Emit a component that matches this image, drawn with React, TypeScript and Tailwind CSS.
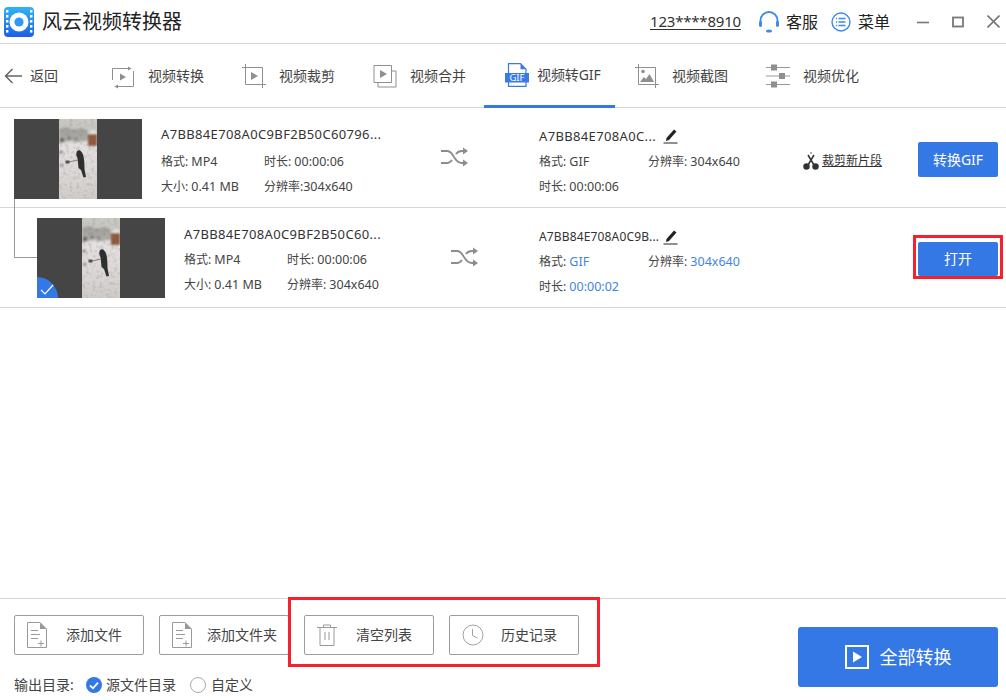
import React from "react";

const FONT = "font-['Noto_Sans','Noto_Sans_CJK_SC',sans-serif]";

function Logo() {
  return (
    <svg width="30" height="30" viewBox="0 0 30 30">
      <defs>
        <linearGradient id="lg" x1="0" y1="0" x2="0" y2="1">
          <stop offset="0" stopColor="#2fb4f4" />
          <stop offset="1" stopColor="#1d5fe6" />
        </linearGradient>
      </defs>
      <rect width="30" height="30" rx="4" fill="url(#lg)" />
      {[3, 8, 13, 18, 23].map((y) => (
        <g key={y} fill="#fff">
          <rect x="2" y={y} width="2.4" height="2.6" />
          <rect x="26" y={y} width="2.4" height="2.6" />
        </g>
      ))}
      <circle cx="15" cy="15" r="9.5" fill="#fff" />
      <circle cx="15" cy="15" r="4.6" fill="#2f9bf0" />
    </svg>
  );
}

const G = "#8f8f8f";

function TabConvert() {
  return (
    <svg width="24" height="26" viewBox="0 0 24 26" fill="none" stroke={G} strokeWidth="1">
      <path d="M1.500 17V5.500H18M4 23.500h18.500V8" />
      <path d="M17 3.500v4l3.500-2z" fill={G} stroke="none" />
      <path d="M7 21.500v4l-3.500-2z" fill={G} stroke="none" />
      <path d="M9 10.500v7l6-3.500z" fill={G} stroke="none" />
    </svg>
  );
}
function TabCrop() {
  return (
    <svg width="24" height="26" viewBox="0 0 24 26" fill="none" stroke={G} strokeWidth="1">
      <path d="M3.500 1v20.500H24M0 4.500h20.500V25" />
      <path d="M9 9v8l7-4z" fill={G} stroke="none" />
    </svg>
  );
}
function TabMerge() {
  return (
    <svg width="24" height="24" viewBox="0 0 24 24" fill="none" stroke={G} strokeWidth="1">
      <path d="M1 1.500h17.500v17H1z" />
      <path d="M5 18.500v4.500h18V7h-4.500" />
      <path d="M7 6v8l7-4z" fill={G} stroke="none" />
    </svg>
  );
}
function TabGif() {
  return (
    <svg width="24" height="24" viewBox="0 0 24 24">
      <path d="M3.500 11V.7H15.500l5.500 5.500V11M3.500 18v5.300h17.500V18" fill="none" stroke="#3a7ae8" strokeWidth="1.200" />
      <path d="M15.500 .7v5.500h5.500z" fill="#3a7ae8" />
      <rect x="0" y="10" width="24" height="9.500" fill="#3a7ae8" />
      <text x="12" y="18.300" textAnchor="middle" fontSize="9.500" fill="#fff" fontFamily="'Noto Sans',sans-serif">GIF</text>
    </svg>
  );
}
function TabShot() {
  return (
    <svg width="24" height="26" viewBox="0 0 24 26" fill="none" stroke={G} strokeWidth="1">
      <path d="M3.500 1v20.500H24M0 4.500h20.500V25" />
      <circle cx="8" cy="8.500" r="1.800" fill={G} stroke="none" />
      <path d="M5 19l4-5 2 2 3.500-5 4.500 8z" fill={G} stroke="none" />
    </svg>
  );
}
function TabOpt() {
  return (
    <svg width="24" height="24" viewBox="0 0 24 24" stroke="#999" strokeWidth="1">
      <path d="M0 3.500h24M0 12h24M0 20.500h24" />
      <g fill={G} stroke="none">
        <rect x="5" y="0.500" width="6" height="6" />
        <rect x="13" y="9" width="6" height="6" />
        <rect x="5" y="17.500" width="6" height="6" />
      </g>
    </svg>
  );
}

function Photo({ id }: { id: string }) {
  return (
    <svg width="38" height="80" viewBox="0 0 38 80" className="block">
      <defs>
        <linearGradient id={`snow${id}`} x1="0" y1="0" x2="0" y2="1">
          <stop offset="0" stopColor="#c9c8c2" />
          <stop offset="0.14" stopColor="#c6c5bf" />
          <stop offset="0.32" stopColor="#e4e0e0" />
          <stop offset="0.7" stopColor="#dbd7d6" />
          <stop offset="1" stopColor="#cfcbc8" />
        </linearGradient>
        <filter id={`soft${id}`} x="-10%" y="-10%" width="120%" height="120%">
          <feGaussianBlur stdDeviation="1" />
        </filter>
        <filter id={`grain${id}`} x="0" y="0" width="100%" height="100%">
          <feTurbulence type="fractalNoise" baseFrequency="0.28" numOctaves="2" seed="4" />
          <feColorMatrix
            type="matrix"
            values="0 0 0 0 0.35  0 0 0 0 0.33  0 0 0 0 0.32  2.6 0 0 0 -1.25"
          />
        </filter>
      </defs>
      <rect width="38" height="80" fill={`url(#snow${id})`} />
      <rect width="38" height="80" filter={`url(#grain${id})`} opacity="0.45" />
      <g filter={`url(#soft${id})`}>
        <path d="M0 10l7-2 8 3 8-2 7 4v8l-10 2-10-1-10 3z" fill="#7f7e7a" opacity="0.5" />
        <circle cx="3" cy="21" r="2" fill="#5a5856" />
        <circle cx="10" cy="19" r="1.500" fill="#6a6765" />
        <circle cx="17" cy="20" r="1.300" fill="#777573" />
        <circle cx="2" cy="33" r="1.500" fill="#6a6765" />
        <circle cx="3" cy="46" r="1.200" fill="#6a6765" />
        <rect x="29" y="14" width="9" height="13" fill="#8d5a3c" />
        <path d="M28 15l5-4 5 1v3z" fill="#e6e2de" />
      </g>
      <path d="M10 43l9-2" stroke="#6a6764" strokeWidth="0.800" />
      <rect x="6.500" y="41.500" width="4" height="3" fill="#55524f" />
      <path d="M17.500 33.500c.5-2.500 3.800-3 5-.5 1.800 1.500 2.500 6 2.800 10l.2 7 1.500 8-2.500.5-2.500-7.500-2.500-2-.8-9-1.500-4z" fill="#2f2f30" />
    </svg>
  );
}

function Thumb({ check, id }: { check?: boolean; id: string }) {
  return (
    <div className="relative w-[128px] h-[80px] bg-[#454545] flex justify-center overflow-hidden shrink-0">
      <Photo id={id} />
      {check && (
        <div className="absolute left-0 bottom-0 w-[21px] h-[21px] bg-[#3478e6] rounded-tr-[21px] flex items-end">
          <svg width="16" height="14" viewBox="0 0 16 14" fill="none" stroke="#fff" strokeWidth="1.200" className="mb-[2px] ml-[2px]">
            <path d="M2 8l4 4 8-9" />
          </svg>
        </div>
      )}
    </div>
  );
}

function Shuffle() {
  return (
    <svg width="28" height="20" viewBox="0 0 28 20" fill="none" stroke="#8c8c8c" strokeWidth="1.800">
      <path d="M0 4h6c4 0 5 3 7 6s3 6 8 6h3" />
      <path d="M0 16h6c2.500 0 4-1.500 5-3M15 7c1-1.500 3-3 6-3h3" />
      <path d="M22 0.500l5 3.500-5 3.500z" fill="#8c8c8c" stroke="none" />
      <path d="M22 12.500l5 3.500-5 3.500z" fill="#8c8c8c" stroke="none" />
    </svg>
  );
}

function Pencil() {
  return (
    <svg width="15" height="16" viewBox="0 0 15 16" className="shrink-0">
      <path d="M3.500 10L11 1.500l2.500 2-7.500 8.500L3 13z" fill="#222" />
      <path d="M0.500 15h14" stroke="#222" strokeWidth="1" />
    </svg>
  );
}

function Scissors() {
  return (
    <svg width="16" height="18" viewBox="0 0 16 18" fill="none" stroke="#333" strokeWidth="1.500">
      <path d="M5 3l6 10M11 3L5 13" />
      <path d="M8 0v2" strokeWidth="0.800" />
      <circle cx="3.500" cy="14.500" r="2.500" fill="#333" />
      <circle cx="12.500" cy="14.500" r="2.500" fill="#333" />
    </svg>
  );
}

function TxFile({ text }: { text: string }) {
  return <div className="text-[13px] leading-[18px] tracking-[0.35px] text-[#333] whitespace-nowrap">{text}</div>;
}

function Meta({ label, value, blue, w }: { label: string; value: string; blue?: boolean; w?: string }) {
  return (
    <div className={`text-xs leading-[18px] text-[#444] whitespace-nowrap ${w ?? ""}`}>
      {label}
      <span className={`text-[12.5px] ${blue ? "text-[#3f84e5]" : ""}`}>{value}</span>
    </div>
  );
}

function FileIcon() {
  return (
    <svg width="20" height="26" viewBox="0 0 20 26" fill="none" stroke="#999" strokeWidth="1">
      <path d="M.5.500H13l6.500 6.500v18.500H.5z" />
      <path d="M13 .5l6.500 6.500H13z" fill="#999" stroke="none" />
      <path d="M4 8.500h7M4 12.500h9M4 16.500h7" />
      <path d="M11 21.500h6M14 18.500v6" />
    </svg>
  );
}

function TrashIcon() {
  return (
    <svg width="20" height="22" viewBox="0 0 20 22" fill="none" stroke="#999" strokeWidth="1">
      <path d="M0 3.500h20M6.500 3.500V1h7v2.500" />
      <path d="M3 3.500v18h14v-18" />
      <path d="M8 8v8M12 8v8" />
    </svg>
  );
}

function ClockIcon() {
  return (
    <svg width="22" height="22" viewBox="0 0 22 22" fill="none" stroke="#a3a3a3" strokeWidth="1">
      <circle cx="11" cy="11" r="10" />
      <path d="M10.500 5v6.500l5 2.500" />
    </svg>
  );
}

function FootBtn({ icon, text, pad, gap }: { icon: React.ReactNode; text: string; pad: string; gap: string }) {
  return (
    <div className={`w-[130px] h-[40px] border border-[#9c9c9c] rounded-[2px] flex items-center ${pad} ${gap} text-sm text-[#444] whitespace-nowrap`}>
      {icon}
      <span>{text}</span>
    </div>
  );
}

const tabs = [
  { icon: <TabConvert />, text: "视频转换" },
  { icon: <TabCrop />, text: "视频裁剪" },
  { icon: <TabMerge />, text: "视频合并" },
  { icon: <TabGif />, text: "视频转GIF", active: true },
  { icon: <TabShot />, text: "视频截图" },
  { icon: <TabOpt />, text: "视频优化" },
];

export default function App() {
  return (
    <div className={`relative w-[1006px] h-[700px] bg-white overflow-hidden flex flex-col ${FONT}`}>
      {/* title bar */}
      <div className="h-[44px] shrink-0 border-b border-[#d6d6d6] flex items-center pl-[4px]">
        <Logo />
        <span className="ml-[8px] text-[20px] text-[#222] whitespace-nowrap">风云视频转换器</span>
        <span className="ml-[468px] w-[91px] text-[15px] tracking-[-0.2px] text-[#333] underline underline-offset-2 whitespace-nowrap">123****8910</span>
        <svg width="20" height="22" viewBox="0 0 20 22" fill="none" className="ml-[18px]">
          <path d="M1.500 13V9.500a8.500 8.500 0 0 1 17 0V13" stroke="#3f8ae8" strokeWidth="1.800" />
          <rect x="0" y="10" width="3" height="6" rx="1.400" fill="#3f8ae8" />
          <rect x="17" y="10" width="3" height="6" rx="1.400" fill="#3f8ae8" />
          <ellipse cx="10" cy="20" rx="3" ry="1.600" fill="#3f8ae8" />
        </svg>
        <span className="ml-[7px] text-[16px] text-[#222] whitespace-nowrap">客服</span>
        <svg width="20" height="20" viewBox="0 0 20 20" fill="none" stroke="#3f8ae8" className="ml-[13px]">
          <circle cx="10" cy="10" r="9" strokeWidth="1.400" />
          <path d="M7.500 6.500h7M7.500 10h7M7.500 13.500h7" strokeWidth="1.400" />
          <path d="M5 6.500h1.200M5 10h1.200M5 13.500h1.200" strokeWidth="1.400" />
        </svg>
        <span className="ml-[7px] text-[16px] text-[#222] whitespace-nowrap">菜单</span>
        <svg width="12" height="12" viewBox="0 0 12 12" stroke="#777" strokeWidth="1.600" fill="none" className="ml-[27px]">
          <path d="M0 6.500h12" />
        </svg>
        <svg width="12" height="12" viewBox="0 0 12 12" stroke="#777" strokeWidth="1.800" fill="none" className="ml-[23px]">
          <rect x="1" y="1.500" width="10" height="9" />
        </svg>
        <svg width="13" height="13" viewBox="0 0 13 13" stroke="#777" strokeWidth="1.600" fill="none" className="ml-[23px]">
          <path d="M.5.500l12 12M12.500.5l-12 12" />
        </svg>
      </div>

      {/* tabs */}
      <div className="h-[64px] shrink-0 border-b border-[#d6d6d6] flex">
        <div className="w-[91px] flex items-center pl-[4px] gap-[8px] text-sm text-[#444]">
          <svg width="18" height="16" viewBox="0 0 18 16" fill="none" stroke="#666" strokeWidth="1.500">
            <path d="M18 8H1.500M8.500 1L1.500 8l7 7" />
          </svg>
          <span>返回</span>
        </div>
        {tabs.map((t) => (
          <div
            key={t.text}
            className={`w-[131px] h-[64px] flex items-center whitespace-nowrap text-sm ${
              t.active ? "pl-[21px] gap-[8px] text-[#444] border-b-[3px] border-[#3478e6]" : "pl-[20px] gap-[13px] text-[#444]"
            }`}
          >
            {t.icon}
            <span className={t.active ? "tracking-[-0.1px]" : ""}>{t.text}</span>
          </div>
        ))}
      </div>

      {/* list */}
      <div className="relative flex-1">
        {/* row 1 */}
        <div className="h-[100px] border-b border-[#d6d6d6] flex items-start pl-[14px] pt-[11px]">
          <Thumb id="a" />
          <div className="ml-[19px] w-[278px] shrink-0">
            <div className="mt-[6px]"><TxFile text="A7BB84E708A0C9BF2B50C60796..." /></div>
            <div className="flex mt-[10px]"><Meta w="w-[103px]" label="格式: " value="MP4" /><Meta label="时长: " value="00:00:06" /></div>
            <div className="flex mt-[7px]"><Meta w="w-[103px]" label="大小: " value="0.41 MB" /><Meta label="分辨率:" value="304x640" /></div>
          </div>
          <div className="mt-[28px] w-[100px] shrink-0 pl-[2px]"><Shuffle /></div>
          <div className="w-[264px] shrink-0">
            <div className="flex items-center gap-[7px] mt-[8px]"><TxFile text="A7BB84E708A0C..." /><Pencil /></div>
            <div className="flex mt-[8px]"><Meta w="w-[109px]" label="格式: " value="GIF" /><Meta label="分辨率: " value="304x640" /></div>
            <div className="mt-[7px]"><Meta label="时长: " value="00:00:06" /></div>
          </div>
          <div className="w-[115px] shrink-0 mt-[33px] flex items-center gap-[3px] text-xs text-[#333] whitespace-nowrap">
            <Scissors />
            <span className="underline">裁剪新片段</span>
          </div>
          <div className="w-[80px] h-[35px] mt-[23px] bg-[#3478e6] rounded-[2px] text-white text-sm flex items-center justify-center whitespace-nowrap">转换GIF</div>
        </div>

        {/* row 2 */}
        <div className="h-[100px] border-b border-[#d6d6d6] flex items-start pl-[37px] pt-[10px]">
          <Thumb check id="b" />
          <div className="ml-[19px] w-[267px] shrink-0">
            <div className="mt-[7px]"><TxFile text="A7BB84E708A0C9BF2B50C60..." /></div>
            <div className="flex mt-[8px]"><Meta w="w-[103px]" label="格式: " value="MP4" /><Meta label="时长: " value="00:00:06" /></div>
            <div className="flex mt-[7px]"><Meta w="w-[103px]" label="大小: " value="0.41 MB" /><Meta label="分辨率: " value="304x640" /></div>
          </div>
          <div className="mt-[29px] w-[88px] shrink-0"><Shuffle /></div>
          <div className="w-[379px] shrink-0">
            <div className="flex items-center gap-[4px] mt-[10px]">
              <span className="text-xs leading-[18px] tracking-[0.15px] text-[#333] whitespace-nowrap">A7BB84E708A0C9B...</span>
              <Pencil />
            </div>
            <div className="flex mt-[7px]"><Meta w="w-[109px]" label="格式: " value="GIF" blue /><Meta label="分辨率: " value="304x640" blue /></div>
            <div className="mt-[7px]"><Meta label="时长: " value="00:00:02" blue /></div>
          </div>
          <div className="w-[80px] h-[34px] mt-[24px] bg-[#3478e6] rounded-[2px] text-white text-sm flex items-center justify-center">打开</div>
        </div>

        {/* connector between source and clip */}
        <div className="absolute left-[14px] top-[91px] w-[23px] h-[59px] border-l border-b border-[#999]" />
        {/* annotation */}
        <div className="absolute left-[913px] top-[127px] w-[90px] h-[44px] border-[3px] border-[#f5222d]" />
      </div>

      {/* footer */}
      <div className="h-[102px] shrink-0 border-t border-[#d6d6d6] flex pl-[14px] pt-[16px] relative">
        <div className="w-[784px] shrink-0">
          <div className="flex gap-[15px]">
            <FootBtn icon={<FileIcon />} text="添加文件" pad="pl-[12px]" gap="gap-[19px]" />
            <FootBtn icon={<FileIcon />} text="添加文件夹" pad="pl-[12px]" gap="gap-[15px]" />
            <FootBtn icon={<TrashIcon />} text="清空列表" pad="pl-[12px]" gap="gap-[19px]" />
            <FootBtn icon={<ClockIcon />} text="历史记录" pad="pl-[12px]" gap="gap-[17px]" />
          </div>
          <div className="flex items-center mt-[20px] text-[13px] text-[#444] h-[20px] whitespace-nowrap">
            <span className="w-[72px] text-sm">输出目录:</span>
            <svg width="16" height="16" viewBox="0 0 16 16" className="shrink-0">
              <circle cx="8" cy="8" r="8" fill="#3478e6" />
              <path d="M4 8.500l3 2.800 5-5.600" stroke="#fff" strokeWidth="1.800" fill="none" />
            </svg>
            <span className="ml-[4px] text-sm">源文件目录</span>
            <span className="ml-[14px] w-[16px] h-[16px] rounded-full border border-[#aaa] shrink-0" />
            <span className="ml-[5px] text-sm">自定义</span>
          </div>
        </div>
        <div className="w-[200px] h-[60px] mt-[12px] bg-[#3478e6] rounded-[3px] flex items-center justify-center gap-[11px] text-white text-[18px] whitespace-nowrap">
          <svg width="24" height="24" viewBox="0 0 24 24" fill="none">
            <rect x="1" y="1" width="22" height="22" stroke="#fff" strokeWidth="2" />
            <path d="M8 6.500v11l9-5.500z" fill="#fff" />
          </svg>
          <span>全部转换</span>
        </div>
        {/* annotation */}
        <div className="absolute left-[288px] top-[-2px] w-[312px] h-[70px] border-[3px] border-[#f5222d]" />
      </div>
    </div>
  );
}
